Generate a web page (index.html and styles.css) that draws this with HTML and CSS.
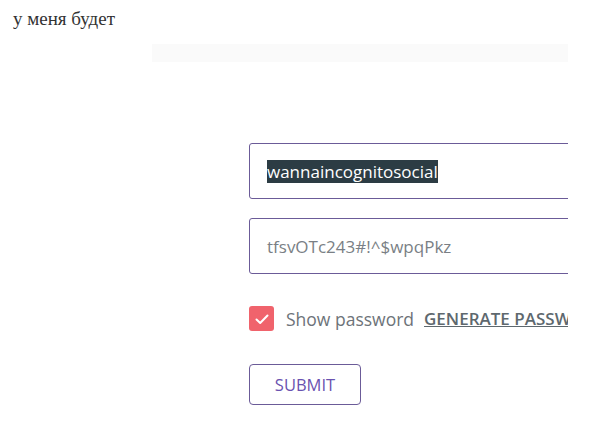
FILE: index.html
```html
<!DOCTYPE html>
<html lang="ru">
<head>
    <meta charset="UTF-8">
    <title>Login</title>
    <link rel="stylesheet" href="styles.css">
</head>
<body>
    <div class="page">
        <p class="note">у меня будет</p>

        <!-- top bar strip -->
        <div class="strip"></div>

        <!-- Login Form -->
        <form class="login-form">
            <div class="field"><span class="selected">wannaincognitosocial</span></div>
            <div class="field muted">tfsvOTc243#!^$wpqPkz</div>

            <div class="options">
                <span class="checkbox">
                    <svg width="16" height="16" viewBox="0 0 16 16">
                        <path d="M2.5 8.5 L6.2 12 L13.5 4.5" fill="none" stroke="#fff" stroke-width="2" stroke-linecap="round" stroke-linejoin="round"/>
                    </svg>
                </span>
                <span class="label">Show password</span>
                <a class="generate">GENERATE PASSWORD</a>
            </div>

            <button type="button" class="submit">SUBMIT</button>
        </form>
    </div>
</body>
</html>
```

FILE: styles.css
```css
/* Basic Styling */
body {
    margin: 0;
    padding: 0;
    background: #fff;
    font-family: 'Open Sans', 'Noto Sans', Arial, sans-serif;
}

.page {
    width: 568px;
    height: 425px;
    overflow: hidden;
}

.note {
    margin: 0;
    padding: 8px 0 0 13px;
    font-family: 'Liberation Serif', serif;
    font-size: 19px;
    line-height: 22px;
    color: #333;
}

/* faint strip under the header */
.strip {
    margin: 14px 0 0 152px;
    height: 18px;
    background: #fafafa;
}

/* Form */
.login-form {
    margin: 81px 0 0 249px;
    width: 420px;
}

.field {
    height: 54px;
    border: 1px solid #6b5b98;
    border-radius: 3px;
    padding: 0 17px;
    display: flex;
    align-items: center;
    font-size: 17px;
    color: #222;
    margin-bottom: 19px;
}

.field.muted {
    color: #7a7f85;
}

.selected {
    background: #2c3c44;
    color: #fff;
    line-height: 23px;
}

.options {
    display: flex;
    align-items: center;
    margin-top: 32px;
    font-size: 17.5px;
    white-space: nowrap;
}

.checkbox {
    width: 25px;
    height: 25px;
    border-radius: 3px;
    background: #f0636c;
    display: flex;
    align-items: center;
    justify-content: center;
    margin-right: 12px;
}

.label {
    color: #6d7379;
    margin-right: 10px;
}

.generate {
    color: #5e686e;
    font-weight: 600;
    text-decoration: underline;
    font-size: 17px;
}

.submit {
    margin-top: 33px;
    width: 112px;
    height: 41px;
    border: 1px solid #6b5b98;
    border-radius: 4px;
    background: #fff;
    color: #6a52b0;
    font-family: 'Open Sans', 'Noto Sans', Arial, sans-serif;
    font-size: 16.5px;
    cursor: pointer;
}
```
